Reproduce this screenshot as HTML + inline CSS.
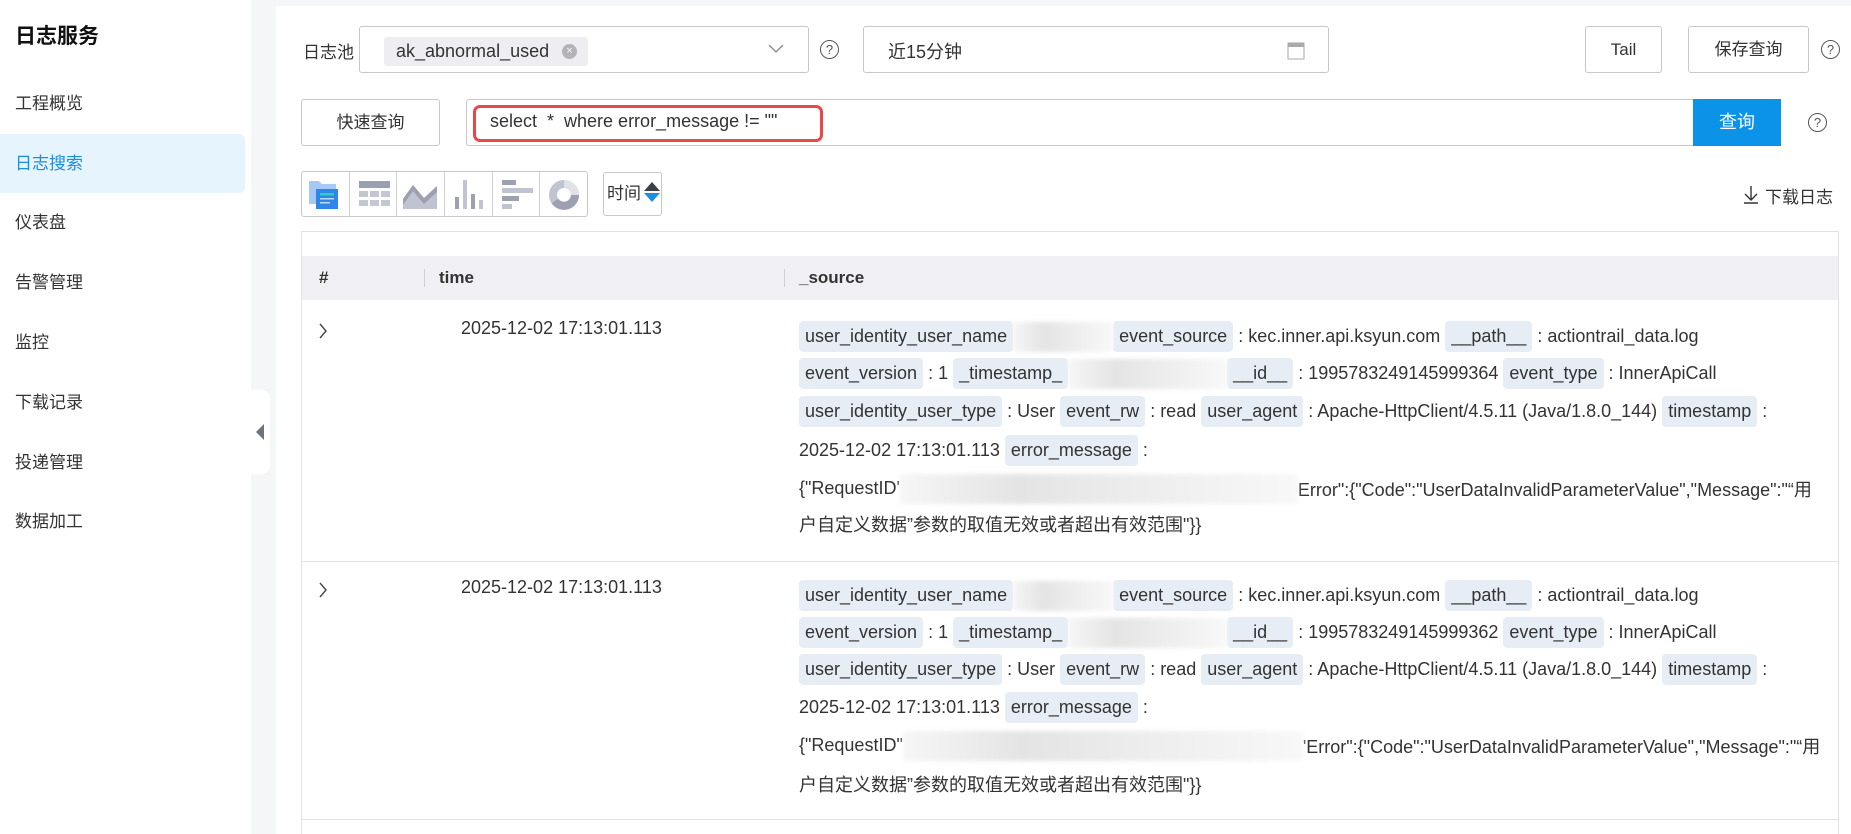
<!DOCTYPE html>
<html><head><meta charset="utf-8"><style>
*{box-sizing:border-box;margin:0;padding:0}
body{width:1851px;height:834px;overflow:hidden;background:#f5f6f8;font-family:"Liberation Sans","Noto Sans CJK SC",sans-serif;color:#333;position:relative}
.abs{position:absolute}
.side{left:0;top:0;width:251px;height:834px;background:#fff}
.title{left:15px;top:20px;font-size:21px;font-weight:bold;color:#111}
.mi{left:15px;font-size:17px;color:#333;height:30px;line-height:30px}
.act{left:0;top:134px;width:245px;height:59px;background:#e6f4fd;border-radius:0 6px 6px 0}
.tab{left:251px;top:390px;width:19px;height:84px;background:#fff;border-radius:0 8px 8px 0}
.main{left:276px;top:6px;width:1575px;height:828px;background:#fff}
.box{border:1px solid #c8c8cc;border-radius:3px;background:#fff}
.btn{border:1px solid #c8c8cc;border-radius:3px;background:#fff;font-size:17px;text-align:center;color:#333}
.q{width:19px;height:19px;border:1.3px solid #555;border-radius:50%;font-size:13px;line-height:17px;text-align:center;color:#555}
.line{position:absolute;left:799px;display:flex;align-items:center;white-space:pre;font-size:18px;color:#333;height:31px}
.t{background:#e6edf5;border-radius:4px;padding:0 6px;height:31px;line-height:31px;display:inline-block}
.blur{display:inline-block;height:30px;background:linear-gradient(90deg,#f6f6f6,#e4e4e4 30%,#ededed 60%,#f8f8f8);filter:blur(2px)}
.th{font-size:17px;font-weight:bold;color:#333}
</style></head><body>
<div class="abs side"></div>
<div class="abs title">日志服务</div>
<div class="abs act"></div>
<div class="abs mi" style="top:89px">工程概览</div>
<div class="abs mi" style="top:149px;color:#1a8ee0">日志搜索</div>
<div class="abs mi" style="top:208px">仪表盘</div>
<div class="abs mi" style="top:268px">告警管理</div>
<div class="abs mi" style="top:328px">监控</div>
<div class="abs mi" style="top:388px">下载记录</div>
<div class="abs mi" style="top:448px">投递管理</div>
<div class="abs mi" style="top:507px">数据加工</div>
<div class="abs tab"><div style="position:absolute;left:5px;top:34px;width:0;height:0;border-top:8px solid transparent;border-bottom:8px solid transparent;border-right:8px solid #6b7480"></div></div>

<div class="abs main"></div>
<!-- row1 -->
<div class="abs" style="left:303px;top:38px;font-size:17px">日志池</div>
<div class="abs box" style="left:359px;top:26px;width:450px;height:47px"></div>
<div class="abs" style="left:384px;top:37px;width:204px;height:29px;background:#eeeef2;border-radius:3px;font-size:18px;line-height:29px;padding-left:12px">ak_abnormal_used</div>
<div class="abs" style="left:562px;top:44px;width:15px;height:15px;border-radius:50%;background:#b3b3b8;color:#fff;font-size:11px;line-height:15px;text-align:center">×</div>
<svg class="abs" style="left:767px;top:43px" width="18" height="12"><path d="M2 2 L9 9 L16 2" stroke="#888" stroke-width="1.3" fill="none"/></svg>
<div class="abs q" style="left:820px;top:40px">?</div>
<div class="abs box" style="left:863px;top:26px;width:466px;height:47px"></div>
<div class="abs" style="left:888px;top:38px;font-size:18px">近15分钟</div>
<svg class="abs" style="left:1287px;top:40px" width="18" height="20"><rect x="1" y="3" width="16" height="16" fill="#fff" stroke="#aaa"/><rect x="1" y="3" width="16" height="4" fill="#aaa"/></svg>
<div class="abs btn" style="left:1585px;top:26px;width:77px;height:47px;line-height:45px">Tail</div>
<div class="abs btn" style="left:1688px;top:26px;width:121px;height:47px;line-height:45px">保存查询</div>
<div class="abs q" style="left:1821px;top:40px">?</div>
<!-- row2 -->
<div class="abs btn" style="left:301px;top:99px;width:139px;height:47px;line-height:45px">快速查询</div>
<div class="abs box" style="left:466px;top:99px;width:1230px;height:47px;border-radius:3px 0 0 3px"></div>
<div class="abs" style="left:473px;top:105px;width:350px;height:37px;border:3px solid #e84848;border-radius:7px"></div>
<div class="abs" style="left:490px;top:111px;font-size:18px;white-space:pre">select  *  where error_message != ""</div>
<div class="abs" style="left:1693px;top:99px;width:88px;height:47px;background:#0a93e8;color:#fff;font-size:18px;line-height:47px;text-align:center">查询</div>
<div class="abs q" style="left:1808px;top:113px">?</div>
<!-- row3 icons -->
<div class="abs box" style="left:301px;top:171px;width:287px;height:46px;display:flex;overflow:hidden">
<svg width="48" height="44" style="border-right:1px solid #d0d0d4"><path d="M7 9h10l3 3h14v20H7z" fill="#a6c8f5"/><rect x="14" y="17" width="22" height="20" fill="#2f86e6"/><rect x="18" y="21" width="14" height="2.5" fill="#2ad3c0"/><rect x="18" y="26" width="14" height="1.5" fill="#bcd9fa"/><rect x="18" y="30" width="10" height="1.5" fill="#bcd9fa"/></svg>
<svg width="48" height="44" style="border-right:1px solid #d0d0d4"><rect x="9" y="9" width="31" height="7" fill="#9ba0b0"/><g fill="#c3c7d3"><rect x="9" y="19" width="9" height="6"/><rect x="20" y="19" width="9" height="6"/><rect x="31" y="19" width="9" height="6"/><rect x="9" y="28" width="9" height="6"/><rect x="20" y="28" width="9" height="6"/><rect x="31" y="28" width="9" height="6"/></g></svg>
<svg width="48" height="44" style="border-right:1px solid #d0d0d4"><path d="M6 37V27l10-14 11 13 13-12v23z" fill="#c0c4d0"/><path d="M6 27l10-14 11 13 13-12v6L27 32 16 19 6 33z" fill="#9ca0b0"/></svg>
<svg width="48" height="44" style="border-right:1px solid #d0d0d4"><rect x="10" y="25" width="4" height="12" fill="#9ca0b0"/><rect x="18" y="8" width="4" height="29" fill="#c0c4d0"/><rect x="26" y="22" width="4" height="15" fill="#9ca0b0"/><rect x="34" y="28" width="4" height="9" fill="#c0c4d0"/></svg>
<svg width="48" height="44" style="border-right:1px solid #d0d0d4"><rect x="9" y="8" width="14" height="5" fill="#9ca0b0"/><rect x="9" y="16" width="31" height="5" fill="#c0c4d0"/><rect x="9" y="24" width="17" height="5" fill="#9ca0b0"/><rect x="9" y="32" width="10" height="5" fill="#c0c4d0"/></svg>
<svg width="47" height="44"><circle cx="24" cy="23" r="11" fill="none" stroke="#c0c4d0" stroke-width="8"/><path d="M24 12a11 11 0 0 1 11 11" stroke="#e0e2e8" stroke-width="8" fill="none"/><path d="M35 23a11 11 0 0 1-20 6" stroke="#9ca0b0" stroke-width="8" fill="none"/></svg>
</div>
<div class="abs btn" style="left:603px;top:172px;width:59px;height:44px;font-size:17px;line-height:42px;text-align:left;padding-left:3px">时间</div>
<div class="abs" style="left:644px;top:182px;width:0;height:0;border-left:8px solid transparent;border-right:8px solid transparent;border-bottom:9px solid #3a3f48"></div>
<div class="abs" style="left:644px;top:193px;width:0;height:0;border-left:8px solid transparent;border-right:8px solid transparent;border-top:9px solid #1a8ee0"></div>
<svg class="abs" style="left:1742px;top:184px" width="18" height="20"><path d="M9 2v13M3 10l6 6 6-6M2 19h14" stroke="#333" stroke-width="1.4" fill="none"/></svg>
<div class="abs" style="left:1765px;top:183px;font-size:17px">下载日志</div>
<!-- table -->
<div class="abs" style="left:301px;top:231px;width:1538px;height:603px;border:1px solid #e2e2e6;border-bottom:none;background:#fff"></div>
<div class="abs" style="left:302px;top:256px;width:1536px;height:44px;background:#f0f0f4"></div>
<div class="abs th" style="left:319px;top:268px">#</div>
<div class="abs" style="left:424px;top:269px;width:1px;height:18px;background:#d0d0d4"></div>
<div class="abs th" style="left:439px;top:268px">time</div>
<div class="abs" style="left:784px;top:269px;width:1px;height:18px;background:#d0d0d4"></div>
<div class="abs th" style="left:799px;top:268px">_source</div>
<div class="abs" style="left:302px;top:561px;width:1536px;height:1px;background:#e2e2e6"></div>
<div class="abs" style="left:302px;top:819px;width:1536px;height:1px;background:#e2e2e6"></div>

<svg class="abs" style="left:317px;top:322px" width="12" height="18"><path d="M3 2l6 7-6 7" stroke="#444" stroke-width="1.4" fill="none"/></svg>
<div class="abs" style="left:461px;top:318px;font-size:18px">2025-12-02 17:13:01.113</div>
<svg class="abs" style="left:317px;top:581px" width="12" height="18"><path d="M3 2l6 7-6 7" stroke="#444" stroke-width="1.4" fill="none"/></svg>
<div class="abs" style="left:461px;top:577px;font-size:18px">2025-12-02 17:13:01.113</div>

<!-- row1 source -->
<div class="line" style="top:321px"><span class="t">user_identity_user_name</span><span class="blur" style="width:100px"></span><span class="t">event_source</span> : kec.inner.api.ksyun.com <span class="t">__path__</span> : actiontrail_data.log</div>
<div class="line" style="top:358px"><span class="t">event_version</span> : 1 <span class="t">_timestamp_</span><span class="blur" style="width:159px"></span><span class="t">__id__</span> : 1995783249145999364 <span class="t">event_type</span> : InnerApiCall</div>
<div class="line" style="top:396px"><span class="t">user_identity_user_type</span> : User <span class="t">event_rw</span> : read <span class="t">user_agent</span> : Apache-HttpClient/4.5.11 (Java/1.8.0_144) <span class="t">timestamp</span> :</div>
<div class="line" style="top:435px">2025-12-02 17:13:01.113 <span class="t">error_message</span> :</div>
<div class="line" style="top:473px">{"RequestID'<span class="blur" style="width:398px"></span>Error":{"Code":"UserDataInvalidParameterValue","Message":"“用</div>
<div class="line" style="top:508px">户自定义数据”参数的取值无效或者超出有效范围"}}</div>
<!-- row2 source -->
<div class="line" style="top:580px"><span class="t">user_identity_user_name</span><span class="blur" style="width:100px"></span><span class="t">event_source</span> : kec.inner.api.ksyun.com <span class="t">__path__</span> : actiontrail_data.log</div>
<div class="line" style="top:617px"><span class="t">event_version</span> : 1 <span class="t">_timestamp_</span><span class="blur" style="width:159px"></span><span class="t">__id__</span> : 1995783249145999362 <span class="t">event_type</span> : InnerApiCall</div>
<div class="line" style="top:654px"><span class="t">user_identity_user_type</span> : User <span class="t">event_rw</span> : read <span class="t">user_agent</span> : Apache-HttpClient/4.5.11 (Java/1.8.0_144) <span class="t">timestamp</span> :</div>
<div class="line" style="top:692px">2025-12-02 17:13:01.113 <span class="t">error_message</span> :</div>
<div class="line" style="top:730px">{"RequestID"<span class="blur" style="width:400px"></span>'Error":{"Code":"UserDataInvalidParameterValue","Message":"“用</div>
<div class="line" style="top:768px">户自定义数据”参数的取值无效或者超出有效范围"}}</div>
</body></html>
